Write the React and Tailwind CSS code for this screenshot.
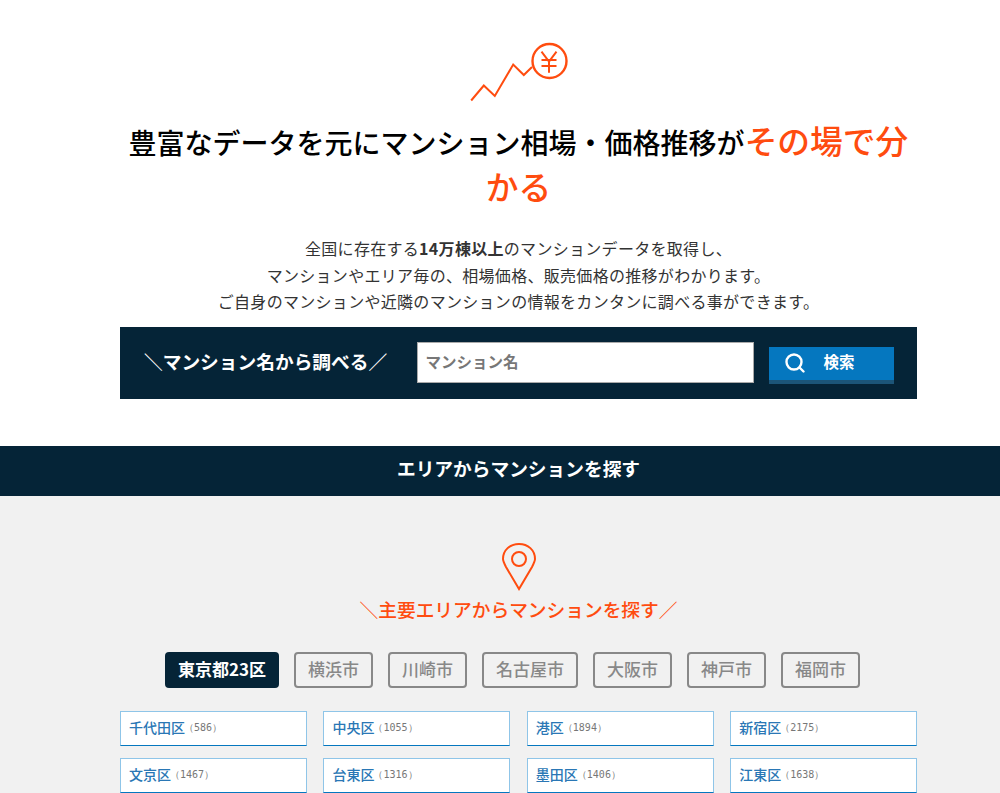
import React from "react";

const tabs = ["横浜市", "川崎市", "名古屋市", "大阪市", "神戸市", "福岡市"];

const wards = [
  ["千代田区", "586"],
  ["中央区", "1055"],
  ["港区", "1894"],
  ["新宿区", "2175"],
  ["文京区", "1467"],
  ["台東区", "1316"],
  ["墨田区", "1406"],
  ["江東区", "1638"],
];

const ChartIcon = () => (
  <svg width="100" height="62" viewBox="0 0 100 62" fill="none" stroke="#ff4c0f" strokeWidth="2" className="block">
    <path d="M2.2 58.5 L14.8 43.5 L25.8 54 L44.2 22.5 L54.8 33 L63 25" />
    <circle cx="80.5" cy="19" r="17" strokeWidth="2.4" />
    <path d="M72.5 9.7 L80 19.5 L87.5 9.7 M80 19.5 V30.7 M72.5 18 H87.5 M72.5 24 H87.5" />
  </svg>
);

const PinIcon = () => (
  <svg width="34" height="48" viewBox="0 0 34 48" fill="none" stroke="#ff4c0f" strokeWidth="2" className="block">
    <path d="M17 46 L4 24 C2 20 1 18 1 16 C1 7 8 1 17 1 C26 1 33 7 33 16 C33 18 32 20 30 24 Z" />
    <circle cx="17" cy="16" r="7" />
  </svg>
);

const SearchIcon = () => (
  <svg width="20" height="20" viewBox="0 0 20 20" fill="none" stroke="#fff" strokeWidth="2.4" className="block">
    <circle cx="9" cy="9" r="7.5" />
    <path d="M14.5 14.5 L18.5 18.5" strokeLinecap="round" />
  </svg>
);

export default function App() {
  return (
    <div className="h-[793px] overflow-hidden bg-white font-['Noto_Sans_CJK_JP','Noto_Sans',sans-serif]">
      <div className="w-[1037px]">
        <section className="mx-auto w-[797px] pt-[42px]">
          <div className="flex justify-center">
            <ChartIcon />
          </div>
          <h2 className="mt-[14px] text-center text-[28px] leading-[44px] font-medium text-black">
            豊富なデータを元にマンション相場・価格推移が
            <span className="text-[32.76px] text-[#ff4c0f]">その場で分かる</span>
          </h2>
          <p className="mt-[25px] text-center text-[16px] leading-[26.5px] tracking-[0.3px] text-[#333]">
            全国に存在する<b>14万棟以上</b>のマンションデータを取得し、
            <br />
            マンションやエリア毎の、相場価格、販売価格の推移がわかります。
            <br />
            ご自身のマンションや近隣のマンションの情報をカンタンに調べる事ができます。
          </p>
          <div className="mt-[12px] flex h-[72px] items-center bg-[#052437] pl-[24px]">
            <p className="w-[272.5px] pb-[2px] text-[18.72px] font-bold whitespace-nowrap text-white">＼マンション名から調べる／</p>
            <div className="flex h-[41px] w-[337px] items-center border border-[#aaa] bg-white pb-[2px] pl-[8px] text-[15.5px] font-bold text-[#777]">
              マンション名
            </div>
            <button className="mt-[5px] ml-[15px] flex h-[37px] w-[125px] items-center border-b-[4px] border-[#1c5578] bg-[#0577bf] pl-[16px] text-[15.5px] font-bold text-white">
              <SearchIcon />
              <span className="mb-[2px] ml-[19px]">検索</span>
            </button>
          </div>
        </section>

        <h2 className="mt-[47px] flex h-[50px] items-center justify-center bg-[#052437] pb-[4px] text-[18.72px] font-bold text-white">
          エリアからマンションを探す
        </h2>

        <section className="h-[400px] bg-[#f1f1f1] pt-[47px]">
          <div className="flex justify-center">
            <PinIcon />
          </div>
          <p className="mt-[3px] text-center text-[18.72px] leading-[30px] font-medium text-[#ff4c0f]">
            ＼主要エリアからマンションを探す／
          </p>
          <div className="mt-[28px] flex justify-center gap-[15px] pr-[12px]">
            <span className="flex h-[36px] items-center rounded-[4px] bg-[#052437] px-[13px] pb-[2px] text-[17px] font-bold text-white">
              東京都23区
            </span>
            {tabs.map((tab) => (
              <span
                key={tab}
                className="flex h-[36px] items-center rounded-[4px] border-2 border-[#888] px-[12px] pb-[2px] text-[17px] font-medium text-[#888]"
              >
                {tab}
              </span>
            ))}
          </div>
          <div className="mx-auto mt-[23px] grid w-[797px] grid-cols-4 gap-x-[16.67px] gap-y-[12px]">
            {wards.map(([name, count]) => (
              <div
                key={name}
                className="flex h-[35px] items-center border border-[#8fc5e8] border-b-[#0577bf] bg-white pb-[2px] pl-[8px]"
              >
                <span className="text-[14px] font-medium text-[#2a77b5]">{name}</span>
                <span className="ml-[-1px] font-['DejaVu_Sans_Mono',monospace] text-[10px] text-[#777]">（{count}）</span>
              </div>
            ))}
          </div>
        </section>
      </div>
    </div>
  );
}
